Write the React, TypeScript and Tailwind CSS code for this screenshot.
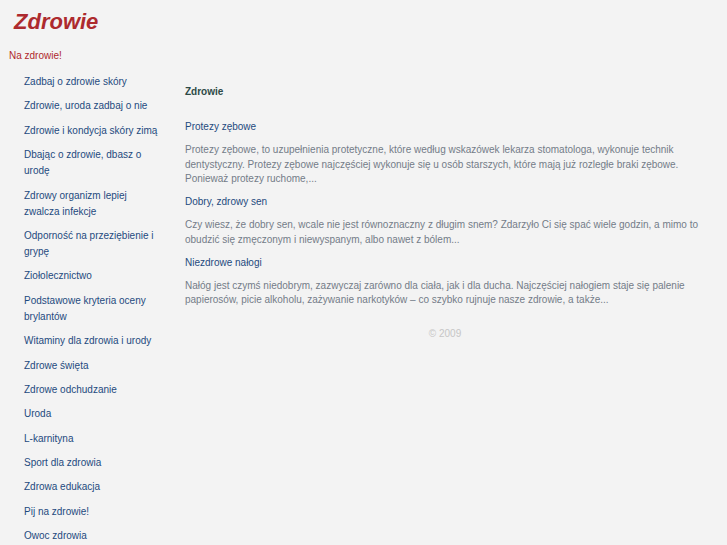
const menu = [
  "Zadbaj o zdrowie skóry",
  "Zdrowie, uroda zadbaj o nie",
  "Zdrowie i kondycja skóry zimą",
  "Dbając o zdrowie, dbasz o urodę",
  "Zdrowy organizm lepiej zwalcza infekcje",
  "Odporność na przeziębienie i grypę",
  "Ziołolecznictwo",
  "Podstawowe kryteria oceny brylantów",
  "Witaminy dla zdrowia i urody",
  "Zdrowe święta",
  "Zdrowe odchudzanie",
  "Uroda",
  "L-karnityna",
  "Sport dla zdrowia",
  "Zdrowa edukacja",
  "Pij na zdrowie!",
  "Owoc zdrowia",
];

const articles = [
  {
    title: "Protezy zębowe",
    text: "Protezy zębowe, to uzupełnienia protetyczne, które według wskazówek lekarza stomatologa, wykonuje technik dentystyczny. Protezy zębowe najczęściej wykonuje się u osób starszych, które mają już rozległe braki zębowe. Ponieważ protezy ruchome,...",
  },
  {
    title: "Dobry, zdrowy sen",
    text: "Czy wiesz, że dobry sen, wcale nie jest równoznaczny z długim snem? Zdarzyło Ci się spać wiele godzin, a mimo to obudzić się zmęczonym i niewyspanym, albo nawet z bólem...",
  },
  {
    title: "Niezdrowe nałogi",
    text: "Nałóg jest czymś niedobrym, zazwyczaj zarówno dla ciała, jak i dla ducha. Najczęściej nałogiem staje się palenie papierosów, picie alkoholu, zażywanie narkotyków – co szybko rujnuje nasze zdrowie, a także...",
  },
];

export default function App() {
  return (
    <div className="min-h-[545px] bg-[#f3f3f3] font-['Liberation_Sans',Arial,sans-serif] text-[10px]">
      {/* naglowek */}
      <header className="pt-[11px] pl-[14px] h-[48px]">
        <h1 className="text-[22px] leading-[22px] font-bold italic text-[#ad2a2e]">Zdrowie</h1>
      </header>

      <div className="flex">
        {/* menu boczne */}
        <aside className="w-[185px] shrink-0">
          <div className="pl-[9px] leading-[16px] text-[#b0282c]">Na zdrowie!</div>
          <ul className="mt-[10px] pl-[24px] pr-[22px] flex flex-col gap-[8.4px]">
            {menu.map((item) => (
              <li key={item} className="leading-[16px]">
                <a href="#" className="text-[#1e4a7e]">{item}</a>
              </li>
            ))}
          </ul>
        </aside>

        {/* tresc */}
        <main className="w-[520px] pt-[36px]">
          <h2 className="font-bold leading-[16px] text-[#2d4a47]">Zdrowie</h2>
          <div className="mt-[19px]">
            {articles.map((a) => (
              <div key={a.title} className="mb-[7.5px]">
                <h3 className="leading-[16px] mb-[8px]">
                  <a href="#" className="text-[#1e4a7e]">{a.title}</a>
                </h3>
                <p className="leading-[14.5px] text-[#737c88]">{a.text}</p>
              </div>
            ))}
          </div>
          <div className="mt-[18px] text-center leading-[16px] text-[#c6c6c6]">© 2009</div>
        </main>
      </div>
    </div>
  );
}
